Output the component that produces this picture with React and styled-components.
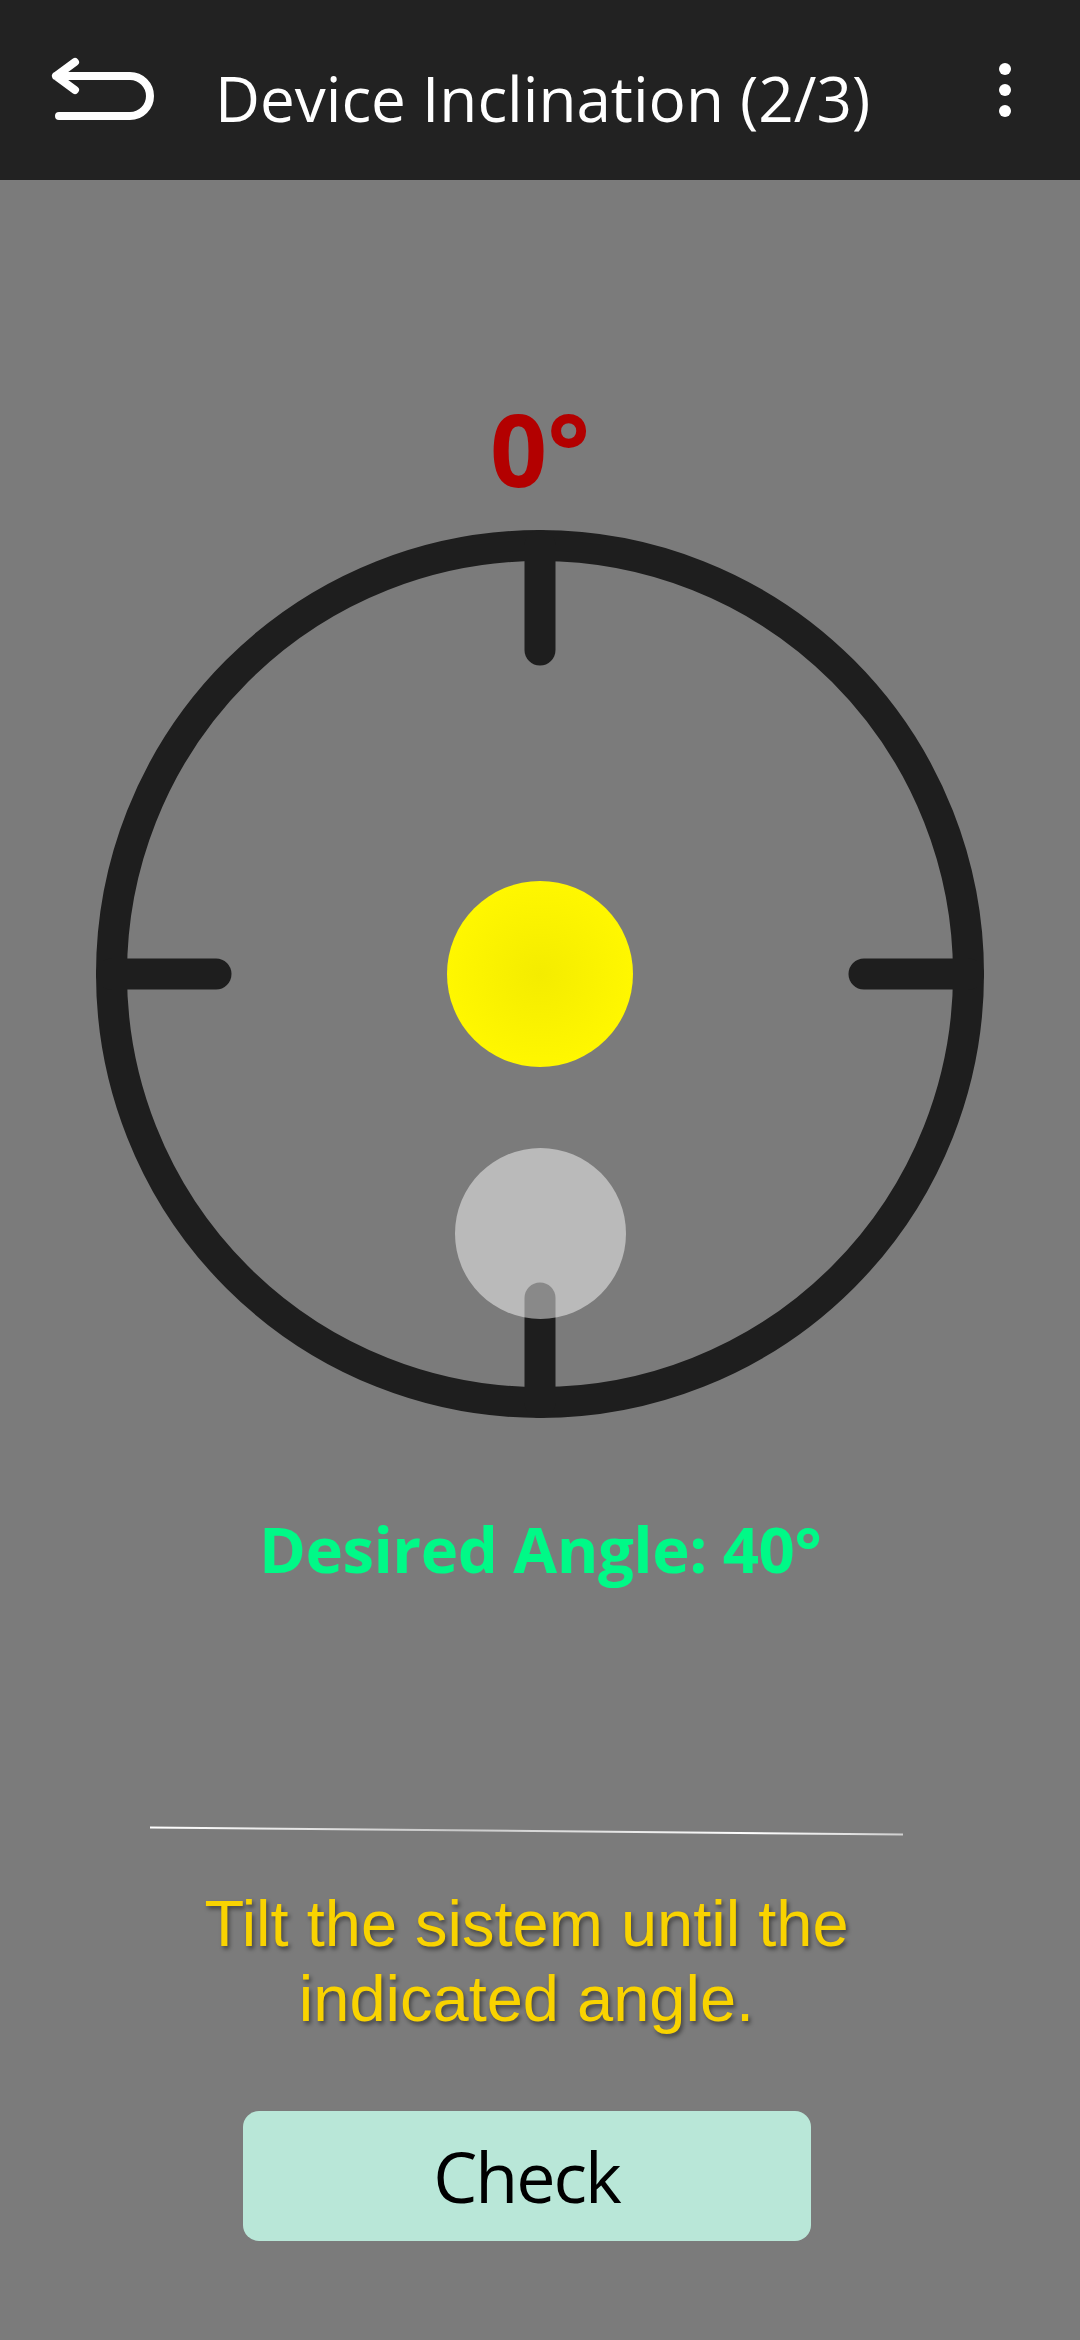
import styled, { createGlobalStyle } from "styled-components";

const GlobalStyle = createGlobalStyle`
  html, body {
    margin: 0;
    padding: 0;
    background: #7b7b7b;
  }
  * {
    box-sizing: border-box;
  }
`;

const TICK_ANGLES = [0, 90, 180, 270];
const DIAL_SIZE = 900;
const CENTER = DIAL_SIZE / 2;
const RING_RADIUS = 428.5;

const BackIcon = () => (
  <svg width="110" height="80" viewBox="0 0 110 80" fill="none">
    <path
      d="M27 12 L8 26 L27 40 M8 26 H82 A20 20 0 0 1 82 66 H11"
      stroke="#fff"
      strokeWidth="8"
      strokeLinecap="round"
      strokeLinejoin="round"
    />
  </svg>
);

const MoreIcon = () => (
  <svg width="24" height="60" viewBox="0 0 24 60">
    <circle cx="12" cy="9" r="6" fill="#fff" />
    <circle cx="12" cy="30" r="6" fill="#fff" />
    <circle cx="12" cy="51" r="6" fill="#fff" />
  </svg>
);

const Level = ({ bubbleOffset, targetOffset }) => (
  <Dial viewBox={`0 0 ${DIAL_SIZE} ${DIAL_SIZE}`}>
    <defs>
      <radialGradient id="bubble" cx="50%" cy="50%" r="50%">
        <stop offset="0%" stopColor="#f4ec00" />
        <stop offset="100%" stopColor="#fff700" />
      </radialGradient>
    </defs>
    <circle
      cx={CENTER}
      cy={CENTER}
      r={RING_RADIUS}
      fill="none"
      stroke="#1e1e1e"
      strokeWidth="31"
    />
    {TICK_ANGLES.map((angle) => (
      <line
        key={angle}
        x1={CENTER}
        y1={CENTER - RING_RADIUS}
        x2={CENTER}
        y2={CENTER - 324}
        stroke="#1e1e1e"
        strokeWidth="31"
        strokeLinecap="round"
        transform={`rotate(${angle} ${CENTER} ${CENTER})`}
      />
    ))}
    <circle
      cx={CENTER}
      cy={CENTER + bubbleOffset}
      r="93"
      fill="url(#bubble)"
    />
    <circle
      cx={CENTER + 0.5}
      cy={CENTER + targetOffset}
      r="85.5"
      fill="#fff"
      fillOpacity="0.48"
    />
  </Dial>
);

const App = () => {
  return (
    <Screen>
      <GlobalStyle />
      <Header>
        <BackButton>
          <BackIcon />
        </BackButton>
        <Title>Device Inclination (2/3)</Title>
        <MenuButton>
          <MoreIcon />
        </MenuButton>
      </Header>
      <Main>
        <AngleReading>0°</AngleReading>
        <Level bubbleOffset={0} targetOffset={259.5} />
        <DesiredAngle>Desired Angle: 40°</DesiredAngle>
        <Footer>
          <Divider />
          <Hint>
            Tilt the sistem until the
            <br />
            indicated angle.
          </Hint>
          <CheckButton>Check</CheckButton>
        </Footer>
      </Main>
    </Screen>
  );
};

export default App;

const Screen = styled.div`
  min-height: 100vh;
  overflow: hidden;
  background: #7b7b7b;
  display: flex;
  flex-direction: column;
`;

const Header = styled.header`
  height: 180px;
  background: #222222;
  display: flex;
  align-items: center;
  padding-left: 48px;
  padding-right: 63px;
`;

const BackButton = styled.div`
  display: flex;
  width: 110px;
  height: 80px;
`;

const Title = styled.h1`
  flex: 1;
  margin: 0 0 0 57px;
  padding-top: 16px;
  font-family: "Open Sans", "Noto Sans", sans-serif;
  font-weight: 400;
  font-size: 62px;
  line-height: 1;
  color: #ffffff;
  white-space: nowrap;
`;

const MenuButton = styled.div`
  display: flex;
  width: 24px;
  height: 60px;
`;

const Main = styled.main`
  flex: 1;
  display: flex;
  flex-direction: column;
  align-items: center;
`;

const AngleReading = styled.div`
  margin-top: 218px;
  font-family: "Open Sans", "Noto Sans", sans-serif;
  font-weight: 700;
  font-size: 100px;
  line-height: 100px;
  color: #b30000;
`;

const Dial = styled.svg`
  display: block;
  width: 900px;
  height: 900px;
  margin-top: 26px;
`;

const DesiredAngle = styled.div`
  margin-top: 93px;
  font-family: "Open Sans", "Noto Sans", sans-serif;
  font-weight: 700;
  font-size: 63.5px;
  line-height: 63.5px;
  letter-spacing: -0.5px;
  color: #00f987;
`;

const Footer = styled.section`
  align-self: stretch;
  display: flex;
  flex-direction: column;
  align-items: center;
  padding: 0 177px 0 150px;
`;

const Divider = styled.div`
  width: 100%;
  height: 2px;
  margin-top: 249px;
  background: linear-gradient(90deg, #ffffff, #c8c8c8 40%, #ffffff 80%, #d0d0d0);
  transform: rotate(0.53deg);
`;

const Hint = styled.p`
  margin: 54px 0 0;
  font-family: "Liberation Sans", Arial, sans-serif;
  font-size: 65px;
  line-height: 75px;
  text-align: center;
  white-space: nowrap;
  color: #f9d300;
  text-shadow: 2px 3px 4px rgba(0, 0, 0, 0.45);
`;

const CheckButton = styled.button`
  margin-top: 75px;
  width: 568px;
  height: 130px;
  border: none;
  border-radius: 16px;
  background: #b9e7d8;
  font-family: "Open Sans", "Noto Sans", sans-serif;
  font-size: 70px;
  letter-spacing: -2px;
  color: #000000;
  padding: 0;
  line-height: 1;
  cursor: pointer;
`;
